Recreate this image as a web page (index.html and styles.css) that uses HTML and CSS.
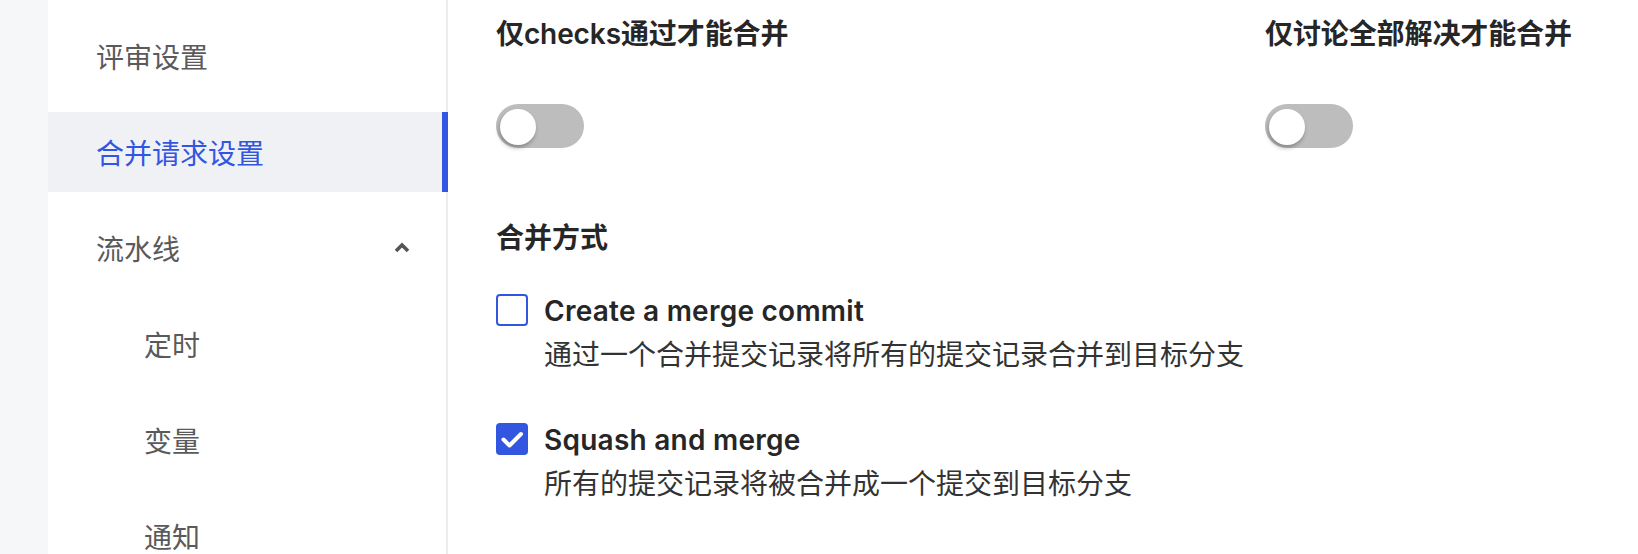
FILE: index.html
```html
<!DOCTYPE html>
<html lang="zh-CN">
<head>
<meta charset="utf-8">
<title>合并请求设置</title>
<link rel="stylesheet" href="styles.css">
</head>
<body>
<div class="page">
  <div class="strip"></div>
  <nav class="sidebar">
    <div class="nav-item">评审设置</div>
    <div class="nav-item active">合并请求设置</div>
    <div class="nav-item group">
      <span>流水线</span>
      <svg class="chevron" width="16" height="12" viewBox="0 0 16 12"><polyline points="2,10 8,4 14,10" fill="none" stroke="#555" stroke-width="3.6" stroke-linejoin="miter"/></svg>
    </div>
    <div class="nav-item sub">定时</div>
    <div class="nav-item sub">变量</div>
    <div class="nav-item sub">通知</div>
  </nav>
  <main class="main">
    <div class="switch-row">
      <div class="switch-col">
        <div class="title">仅checks通过才能合并</div>
        <div class="toggle"><span class="knob"></span></div>
      </div>
      <div class="switch-col">
        <div class="title">仅讨论全部解决才能合并</div>
        <div class="toggle"><span class="knob"></span></div>
      </div>
    </div>
    <div class="section-title">合并方式</div>
    <div class="option">
      <span class="checkbox"></span>
      <div class="option-text">
        <div class="option-label">Create a merge commit</div>
        <div class="option-desc">通过一个合并提交记录将所有的提交记录合并到目标分支</div>
      </div>
    </div>
    <div class="option">
      <span class="checkbox checked">
        <svg width="32" height="32" viewBox="0 0 32 32"><polyline points="7.5,16.5 13.5,22.5 25,11" fill="none" stroke="#fff" stroke-width="4" stroke-linecap="round" stroke-linejoin="round"/></svg>
      </span>
      <div class="option-text">
        <div class="option-label">Squash and merge</div>
        <div class="option-desc">所有的提交记录将被合并成一个提交到目标分支</div>
      </div>
    </div>
  </main>
</div>
</body>
</html>
```

FILE: styles.css
```css
* { box-sizing: border-box; }
html, body {
  margin: 0;
  padding: 0;
  background: #fff;
  height: 100%;
  overflow: hidden;
}
body {
  font-family: "Inter", "Noto Sans CJK SC", sans-serif;
}
.page {
  display: flex;
  height: 554px;
}
.strip {
  width: 48px;
  flex: none;
  background: #f6f7f9;
}
.sidebar {
  width: 400px;
  flex: none;
  border-right: 2px solid #ececec;
  padding-top: 16px;
  display: flex;
  flex-direction: column;
  gap: 16px;
}
.nav-item {
  position: relative;
  height: 80px;
  flex: none;
  line-height: 80px;
  padding-left: 48px;
  font-family: "Noto Sans CJK SC", sans-serif;
  font-size: 28px;
  color: #5a5a5a;
}
.nav-item.active {
  background: #f0f1f4;
  color: #3356e0;
}
.nav-item.active::after {
  content: "";
  position: absolute;
  top: 0;
  right: -2px;
  width: 6px;
  height: 100%;
  background: #3356e0;
}
.nav-item.group {
  display: flex;
  align-items: center;
  justify-content: space-between;
  padding-right: 36px;
}
.chevron { display: block; margin-top: -2px; }
.nav-item.sub { padding-left: 96px; }

.main {
  flex: 1;
  padding-left: 48px;
  padding-top: 14px;
  color: #262626;
}
.switch-row {
  display: grid;
  grid-template-columns: 769px auto;
}
.title {
  font-family: "Inter", "Noto Sans CJK SC", sans-serif;
  font-weight: 600;
  font-size: 28px;
  line-height: 40px;
  letter-spacing: -0.1px;
}
.toggle {
  margin-top: 50px;
  width: 88px;
  height: 44px;
  border-radius: 22px;
  background: #bdbdbd;
  padding: 5px 4px;
}
.knob {
  display: block;
  width: 36px;
  height: 36px;
  border-radius: 50%;
  background: #fff;
  box-shadow: -1px 3px 4px rgba(0,0,0,0.28);
}
.section-title {
  margin-top: 68px;
  font-family: "Noto Sans CJK SC", sans-serif;
  font-weight: 600;
  font-size: 28px;
  line-height: 40px;
}
.option {
  display: flex;
  gap: 16px;
  margin-top: 35px;
}
.option + .option { margin-top: 45px; }
.checkbox {
  flex: none;
  width: 32px;
  height: 32px;
  margin-top: 3px;
  border: 2px solid #3356e0;
  border-radius: 4px;
  background: #fff;
}
.checkbox.checked {
  border: none;
  background: #3356e0;
}
.checkbox svg { display: block; }
.option-label {
  font-family: "Inter", "Noto Sans CJK SC", sans-serif;
  font-weight: 600;
  font-size: 28px;
  line-height: 40px;
  letter-spacing: 0.25px;
}
.option-desc {
  font-family: "Noto Sans CJK SC", sans-serif;
  font-size: 28px;
  line-height: 44px;
  color: #333;
}
```
